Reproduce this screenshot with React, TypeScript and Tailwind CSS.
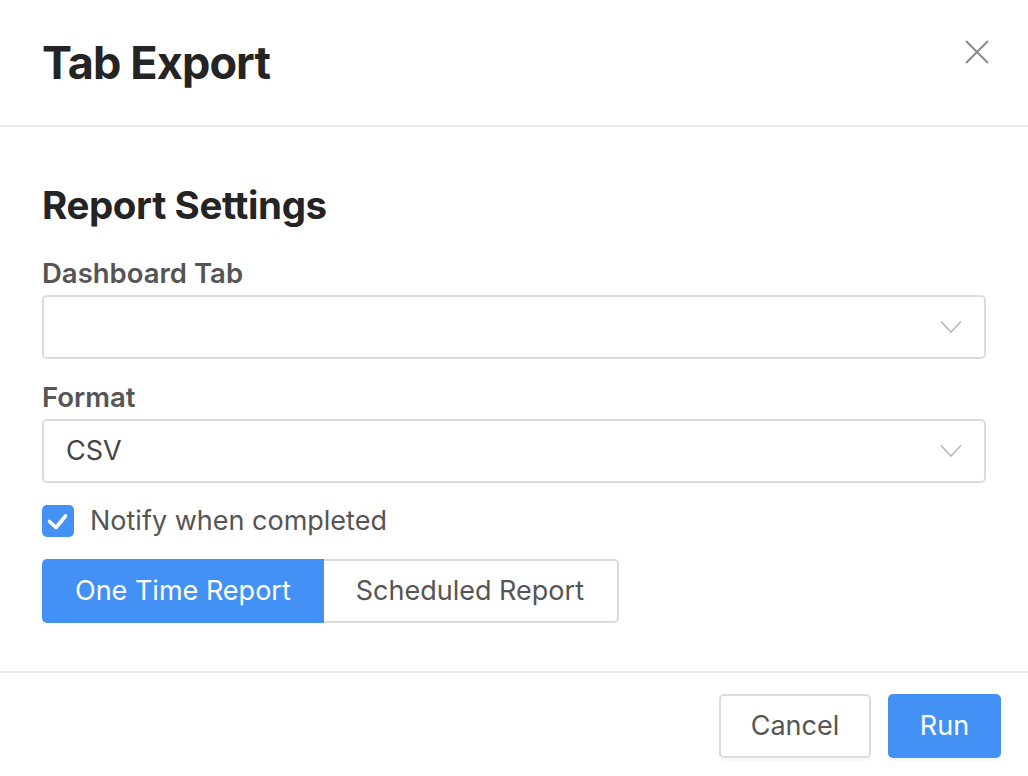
import React, { useState } from 'react';

const font = { fontFamily: 'Inter, "Liberation Sans", sans-serif' };

const Chevron = () => (
  <svg width="22" height="14" viewBox="0 0 22 14" className="text-[#b8b8b8]">
    <polyline points="1,1.5 11,12 21,1.5" fill="none" stroke="currentColor" strokeWidth="1.6" />
  </svg>
);

const SelectBox = ({ value }: { value?: string }) => (
  <div className="flex h-[64px] w-full items-center justify-between rounded-[5px] border-2 border-[#dcdcdc] bg-white pl-[22px] pr-[22px]">
    <span className="text-[27px] text-[#444]">{value}</span>
    <Chevron />
  </div>
);

const App = () => {
  const [mode, setMode] = useState<'once' | 'scheduled'>('once');
  const [notify, setNotify] = useState(true);

  return (
    <div style={font} className="flex h-[776px] w-[1028px] flex-col bg-white">
      {/* Header */}
      <div className="flex h-[127px] shrink-0 items-start justify-between border-b-2 border-[#ececec] pl-[42px] pr-[36px]">
        <h1 className="mt-[40px] text-[45px] font-bold leading-[46px] tracking-[-0.02em] text-[#242424]">Tab Export</h1>
        <button className="mt-[37px] flex h-[30px] w-[30px] items-center justify-center text-[#8a8a8a]">
          <svg width="24" height="24" viewBox="0 0 24 24">
            <path d="M1 1 L23 23 M23 1 L1 23" stroke="currentColor" strokeWidth="2" fill="none" />
          </svg>
        </button>
      </div>

      {/* Body */}
      <div className="flex flex-1 flex-col px-[42px] pt-[56px]">
        <h2 className="text-[38.5px] font-bold leading-[44px] tracking-[-0.01em] text-[#242424]">Report Settings</h2>

        <label className="mt-[28px] text-[27.5px] font-semibold leading-[36px] text-[#555]">Dashboard Tab</label>
        <div className="mt-[4px]">
          <SelectBox />
        </div>

        <label className="mt-[20px] text-[27.5px] font-semibold leading-[36px] text-[#555]">Format</label>
        <div className="mt-[4px]">
          <SelectBox value="CSV" />
        </div>

        <div className="mt-[22px] flex items-center gap-[16px]" onClick={() => setNotify(!notify)}>
          <div className={`flex h-[32px] w-[32px] items-center justify-center rounded-[5px] ${notify ? 'bg-[#4391f5]' : 'border-2 border-[#dcdcdc] bg-white'}`}>
            {notify && (
              <svg width="32" height="32" viewBox="0 0 32 32">
                <polyline points="7.5,16.5 14,22.5 23.5,11" fill="none" stroke="white" strokeWidth="3.6" strokeLinecap="round" strokeLinejoin="round" />
              </svg>
            )}
          </div>
          <span className="text-[27px] leading-[32px] text-[#555]">Notify when completed</span>
        </div>

        <div className="mt-[22px] flex">
          <button
            onClick={() => setMode('once')}
            className={`h-[64px] rounded-l-[5px] px-[33px] text-[27px] ${mode === 'once' ? 'bg-[#4391f5] text-white' : 'border-2 border-[#dcdcdc] bg-white text-[#555]'}`}
          >
            One Time Report
          </button>
          <button
            onClick={() => setMode('scheduled')}
            className={`h-[64px] rounded-r-[5px] pl-[32px] pr-[33px] text-[27px] ${mode === 'scheduled' ? 'bg-[#4391f5] text-white' : 'border-2 border-l-0 border-[#dcdcdc] bg-white text-[#555]'}`}
          >
            Scheduled Report
          </button>
        </div>
      </div>

      {/* Footer */}
      <div className="flex h-[105px] shrink-0 items-start justify-end gap-[17px] border-t-2 border-[#ececec] pr-[27px] pt-[21px]">
        <button className="h-[64px] w-[152px] rounded-[5px] border-2 border-[#dcdcdc] bg-white text-[27px] text-[#555] shadow-[0_3px_0_rgba(0,0,0,0.03)]">
          Cancel
        </button>
        <button className="h-[64px] w-[113px] rounded-[5px] bg-[#4391f5] text-[27px] text-white shadow-[0_3px_0_rgba(0,0,0,0.04)]">
          Run
        </button>
      </div>
    </div>
  );
};

export default App;
